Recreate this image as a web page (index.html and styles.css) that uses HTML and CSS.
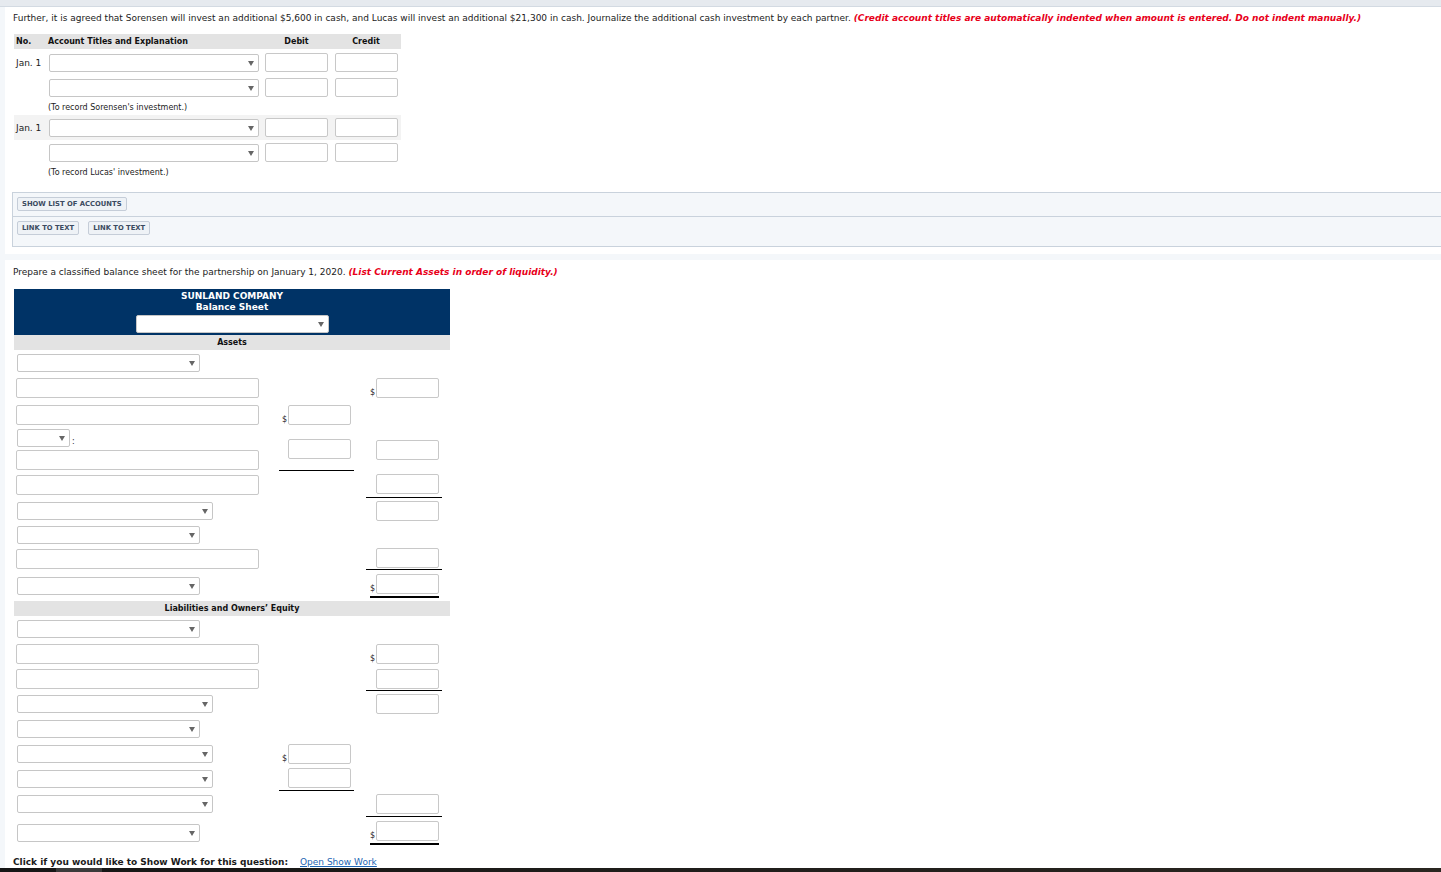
FILE: index.html
```html
<!DOCTYPE html>
<html lang="en">
  <head>
    <meta charset="UTF-8" />
    <title>Partnership investment</title>
    <link rel="stylesheet" href="styles.css">
  </head>
  <body>
    <div class="topbar"></div>

    <!-- part 1: journal entries -->
    <div class="card first">
      <p class="prompt">Further, it is agreed that Sorensen will invest an additional $5,600 in cash, and Lucas will invest an additional $21,300 in cash. Journalize the additional cash investment by each partner. <em>(Credit account titles are automatically indented when amount is entered. Do not indent manually.)</em></p>

      <div class="journal">
        <div class="jhead">
          <span class="no">No.</span>
          <span>Account Titles and Explanation</span>
          <span class="ctr">Debit</span>
          <span class="ctr">Credit</span>
        </div>

        <div class="jrow gap">
          <span class="no">Jan. 1</span>
          <span class="dd j"><select></select></span>
          <input class="num" type="text">
          <input class="num" type="text">
        </div>
        <div class="jrow">
          <span class="no"></span>
          <span class="dd j"><select></select></span>
          <input class="num" type="text">
          <input class="num" type="text">
        </div>
        <div class="jnote">(To record Sorensen's investment.)</div>

        <div class="jrow shade">
          <span class="no">Jan. 1</span>
          <span class="dd j"><select></select></span>
          <input class="num" type="text">
          <input class="num" type="text">
        </div>
        <div class="jrow">
          <span class="no"></span>
          <span class="dd j"><select></select></span>
          <input class="num" type="text">
          <input class="num" type="text">
        </div>
        <div class="jnote">(To record Lucas' investment.)</div>
      </div>

      <div class="panel">
        <div class="panel-row top">
          <span class="btn">SHOW LIST OF ACCOUNTS</span>
        </div>
        <div class="panel-row bottom">
          <span class="btn">LINK TO TEXT</span>
          <span class="btn">LINK TO TEXT</span>
        </div>
      </div>
    </div>

    <!-- part 2: balance sheet -->
    <div class="card second">
      <p class="prompt">Prepare a classified balance sheet for the partnership on January 1, 2020. <em>(List Current Assets in order of liquidity.)</em></p>

      <div class="sheet">
        <div class="sheet-head">
          <b>SUNLAND COMPANY</b>
          <b>Balance Sheet</b>
          <span class="dd hd"><select></select></span>
        </div>

        <div class="band">Assets</div>
        <div class="lines assets">
          <div class="c1"><span class="dd md"><select></select></span></div>

          <div class="c1"><input class="txt" type="text"></div>
          <div class="c3"><span class="amt"><i>$</i><input class="num" type="text"></span></div>

          <div class="c1"><input class="txt" type="text"></div>
          <div class="c2"><span class="amt"><i>$</i><input class="num" type="text"></span></div>

          <div class="c1 stack">
            <span class="pair"><span class="dd sm"><select></select></span><span class="colon">:</span></span>
            <input class="txt" type="text">
          </div>
          <div class="c2 ul"><span class="amt"><input class="num" type="text"></span></div>
          <div class="c3"><span class="amt"><input class="num" type="text"></span></div>

          <div class="c1"><input class="txt" type="text"></div>
          <div class="c3 ul"><span class="amt"><input class="num" type="text"></span></div>

          <div class="c1"><span class="dd lg"><select></select></span></div>
          <div class="c3"><span class="amt"><input class="num" type="text"></span></div>

          <div class="c1"><span class="dd md"><select></select></span></div>

          <div class="c1"><input class="txt" type="text"></div>
          <div class="c3 ul"><span class="amt"><input class="num" type="text"></span></div>

          <div class="c1"><span class="dd md"><select></select></span></div>
          <div class="c3"><span class="amt total"><i>$</i><input class="num" type="text"></span></div>
        </div>

        <div class="band">Liabilities and Owners’ Equity</div>
        <div class="lines liabs">
          <div class="c1"><span class="dd md"><select></select></span></div>

          <div class="c1"><input class="txt" type="text"></div>
          <div class="c3"><span class="amt"><i>$</i><input class="num" type="text"></span></div>

          <div class="c1"><input class="txt" type="text"></div>
          <div class="c3 ul"><span class="amt"><input class="num" type="text"></span></div>

          <div class="c1"><span class="dd lg"><select></select></span></div>
          <div class="c3"><span class="amt"><input class="num" type="text"></span></div>

          <div class="c1"><span class="dd md"><select></select></span></div>

          <div class="c1"><span class="dd lg"><select></select></span></div>
          <div class="c2"><span class="amt"><i>$</i><input class="num" type="text"></span></div>

          <div class="c1"><span class="dd lg"><select></select></span></div>
          <div class="c2 ul"><span class="amt"><input class="num" type="text"></span></div>

          <div class="c1"><span class="dd lg"><select></select></span></div>
          <div class="c3 ul"><span class="amt"><input class="num" type="text"></span></div>

          <div class="c1"><span class="dd md"><select></select></span></div>
          <div class="c3"><span class="amt total"><i>$</i><input class="num" type="text"></span></div>
        </div>
      </div>

      <p class="showwork"><b>Click if you would like to Show Work for this question:</b><a href="#">Open Show Work</a></p>
    </div>

    <div class="toolbar"><span class="tab"></span></div>
  </body>
</html>
```

FILE: styles.css
```css
* {
  margin: 0;
  padding: 0;
  box-sizing: border-box;
}
body {
  background-color: #f4f7fa;
  font-family: "DejaVu Sans", sans-serif;
  font-size: 9px;
  color: #1b1b1b;
}
.topbar {
  height: 7px;
  background-color: #e6eaef;
  border-bottom: 1px solid #d3dae2;
}
.card {
  margin-left: 5px;
  padding-left: 8px;
  background-color: #fff;
}
.card.first {
  padding-top: 5px;
  padding-bottom: 7px;
}
.card.second {
  margin-top: 6px;
  padding-top: 6px;
}
.prompt {
  line-height: 12px;
  white-space: nowrap;
}
.prompt em {
  color: #e8001a;
  font-weight: bold;
  font-style: italic;
}

/* inputs */
input {
  border: 1px solid #c8c8c8;
  border-radius: 2px;
  background-color: #fff;
  outline: none;
}
.num {
  width: 63px;
  height: 20px;
}
.txt {
  width: 243px;
  height: 20px;
  margin-left: 2px;
}
.dd {
  position: relative;
  display: inline-block;
  height: 18px;
  vertical-align: middle;
}
.dd select {
  -webkit-appearance: none;
  appearance: none;
  display: block;
  width: 100%;
  height: 100%;
  border: 1px solid #c6c6c6;
  border-radius: 2px;
  background-color: #fff;
  outline: none;
}
.dd::after {
  content: "";
  position: absolute;
  right: 5px;
  top: 50%;
  margin-top: -2px;
  border-left: 3px solid transparent;
  border-right: 3px solid transparent;
  border-top: 5px solid #666;
  pointer-events: none;
}
.dd.j {
  width: 210px;
  margin-left: 1px;
}
.dd.hd {
  width: 193px;
}
.dd.md {
  width: 183px;
  margin-left: 3px;
}
.dd.lg {
  width: 196px;
  margin-left: 3px;
}
.dd.sm {
  width: 53px;
  margin-left: 3px;
}

/* journal */
.journal {
  width: 387px;
  margin: 10px 0 0 1px;
}
.jhead,
.jrow {
  display: grid;
  grid-template-columns: 34px 214px 69px 70px;
}
.jhead {
  height: 15px;
  line-height: 15px;
  background-color: #e3e3e3;
  font-size: 8px;
  font-weight: bold;
  color: #111;
}
.jhead .ctr {
  text-align: center;
}
.no {
  padding-left: 2px;
}
.jrow {
  height: 25px;
  align-items: center;
  justify-items: center;
}
.jrow > .no,
.jrow > .dd {
  justify-self: start;
}
.jrow .num {
  height: 19px;
}
.jrow.gap {
  margin-top: 1px;
}
.jrow.shade {
  background-color: #f3f3f3;
}
.jnote {
  height: 15px;
  line-height: 15px;
  padding-left: 34px;
  font-size: 8px;
}

/* buttons panel */
.panel {
  margin: 12px 0 0 -1px;
  background-color: #f4f7fa;
  border: 1px solid #c9d2dc;
  border-right: 0;
}
.panel-row {
  display: flex;
  gap: 9px;
  padding: 4px 4px 0;
}
.panel-row.top {
  height: 24px;
  border-bottom: 1px solid #c9d2dc;
}
.panel-row.bottom {
  height: 29px;
}
.btn {
  height: 14px;
  line-height: 12px;
  padding: 0 4px;
  border: 1px solid #c5cdd8;
  border-radius: 2px;
  background-color: #eef2f6;
  font-size: 6.8px;
  font-weight: bold;
  color: #3b4a60;
}

/* balance sheet */
.sheet {
  width: 436px;
  margin: 11px 0 0 1px;
}
.sheet-head {
  height: 46px;
  padding-top: 2px;
  background-color: #003366;
  color: #fff;
  text-align: center;
}
.sheet-head b {
  display: block;
  line-height: 11px;
  font-size: 9px;
}
.sheet-head .dd {
  margin-top: 2px;
}
.band {
  height: 15px;
  line-height: 15px;
  background-color: #e3e3e3;
  text-align: center;
  font-size: 8px;
  font-weight: bold;
  color: #111;
}
.lines {
  display: grid;
  grid-template-columns: 265px 75px 88px;
  align-items: center;
  margin-top: 1px;
}
.assets {
  grid-template-rows: 24px 26px 27px 43px 27px 25px 24px 23px 31px;
}
.liabs {
  grid-template-rows: 24px 26px 24px 26px 24px 25px 25px 26px 32px;
}
.c1 {
  grid-column: 1;
}
.c2,
.c3 {
  display: flex;
  justify-content: flex-end;
  align-items: center;
  padding-right: 3px;
}
.c2 {
  grid-column: 2;
}
.c3 {
  grid-column: 3;
  margin-left: 12px;
}
.ul {
  align-self: stretch;
  border-bottom: 1px solid #000;
}
.stack {
  display: flex;
  flex-direction: column;
  gap: 3px;
}
.pair {
  display: flex;
  align-items: flex-end;
}
.colon {
  margin-left: 2px;
  line-height: 10px;
  font-size: 8px;
}
.amt {
  display: flex;
  align-items: flex-end;
}
.amt i {
  font-style: normal;
  font-size: 8px;
  line-height: 10px;
  margin-right: 1px;
}
.amt.total {
  padding-bottom: 2px;
  border-bottom: 2px solid #000;
}

.showwork {
  margin-top: 7px;
  line-height: 12px;
}
.showwork a {
  margin-left: 12px;
  color: #1c64b3;
}
.toolbar {
  height: 4px;
  background: linear-gradient(to right, #151515, #2a2620);
}
.toolbar .tab {
  display: block;
  width: 46px;
  height: 4px;
  margin-left: 56px;
  background-color: #3a3a3a;
}
```
